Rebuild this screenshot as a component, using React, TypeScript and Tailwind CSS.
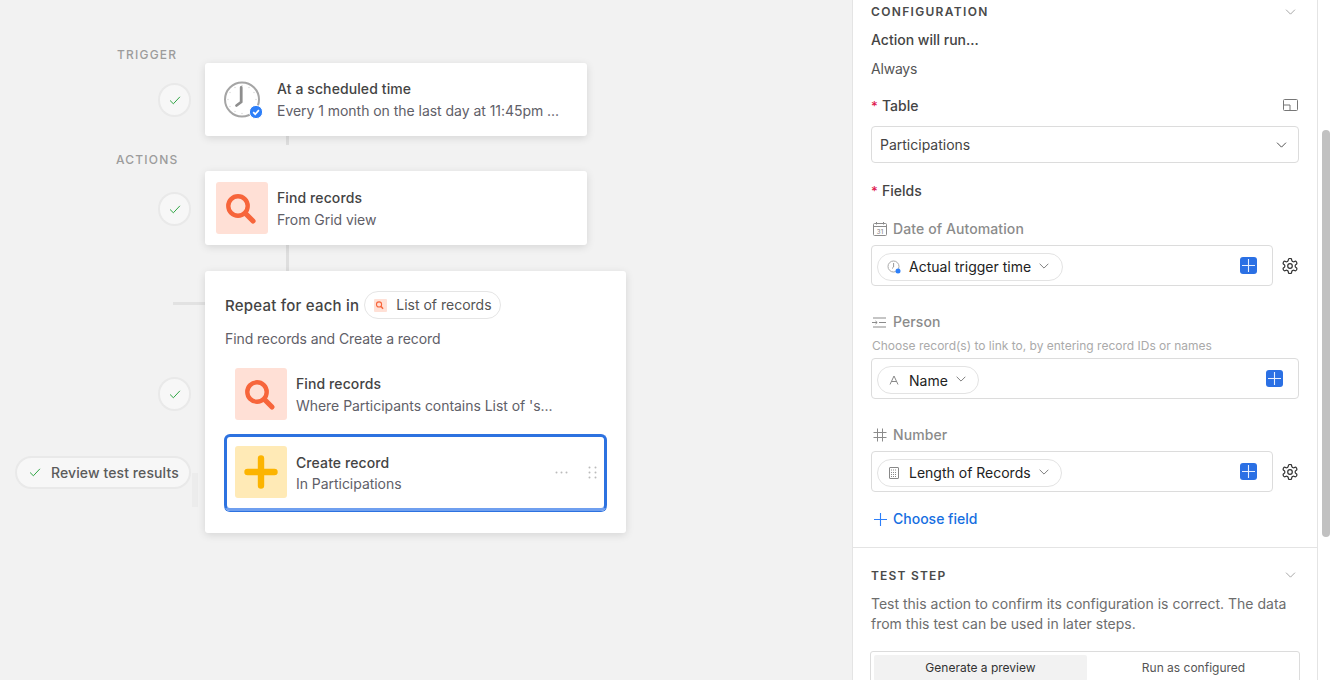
import React from "react";

const Chevron = ({ className = "" }: { className?: string }) => (
  <svg viewBox="0 0 12 7" fill="none" stroke="currentColor" strokeWidth="1" className={className}>
    <path d="M0.8 0.8 6 6 11.2 0.8" />
  </svg>
);

const Check = () => (
  <svg viewBox="0 0 14 11" width="12" height="9" fill="none" stroke="#2aa33f" strokeWidth="1.2">
    <path d="M1 5.5 5 9.5 13 1" />
  </svg>
);

const StatusDot = ({ cls }: { cls: string }) => (
  <div className={`absolute flex h-[34px] w-[33px] items-center justify-center rounded-full border-2 border-[#e9e9e9] bg-[#f7f7f7] ${cls}`}>
    <Check />
  </div>
);

const Magnifier = ({ size = 52 }: { size?: number }) => (
  <svg viewBox="0 0 52 52" width={size} height={size} fill="none" stroke="#f7653b">
    <circle cx="22" cy="24" r="9.7" strokeWidth="4.4" />
    <path d="M29.5 31.5 37 39" strokeWidth="5.2" strokeLinecap="round" />
  </svg>
);

const FindIcon = () => (
  <div className="h-[52px] w-[52px] shrink-0 rounded-[3px] bg-[#ffe0d6]">
    <Magnifier />
  </div>
);

const PlusSquare = () => (
  <div className="flex h-[17px] w-[17px] shrink-0 items-center justify-center rounded-[3px] bg-[#2b70e4]">
    <svg viewBox="0 0 13 13" width="13" height="13" stroke="#e8f0ff" strokeWidth="1.1">
      <path d="M6.5 0V13M0 6.5H13" />
    </svg>
  </div>
);

const Gear = () => (
  <svg viewBox="1.5 1.5 21 21" width="16" height="16" fill="none" stroke="#333" strokeWidth="1.6" strokeLinejoin="round">
    <path d="M12.2 2h-.4a2 2 0 0 0-2 2v.2a2 2 0 0 1-1 1.7l-.4.3a2 2 0 0 1-2 0l-.2-.1a2 2 0 0 0-2.7.7l-.2.4a2 2 0 0 0 .7 2.7l.2.1a2 2 0 0 1 1 1.7v.5a2 2 0 0 1-1 1.8l-.2.1a2 2 0 0 0-.7 2.7l.2.4a2 2 0 0 0 2.7.7l.2-.1a2 2 0 0 1 2 0l.4.3a2 2 0 0 1 1 1.7v.2a2 2 0 0 0 2 2h.4a2 2 0 0 0 2-2v-.2a2 2 0 0 1 1-1.7l.4-.3a2 2 0 0 1 2 0l.2.1a2 2 0 0 0 2.7-.7l.2-.4a2 2 0 0 0-.7-2.7l-.2-.1a2 2 0 0 1-1-1.8v-.5a2 2 0 0 1 1-1.7l.2-.1a2 2 0 0 0 .7-2.7l-.2-.4a2 2 0 0 0-2.7-.7l-.2.1a2 2 0 0 1-2 0l-.4-.3a2 2 0 0 1-1-1.7V4a2 2 0 0 0-2-2z" />
    <circle cx="12" cy="12" r="3" />
  </svg>
);

const Required = ({ label }: { label: string }) => (
  <div className="flex h-5 items-center text-sm font-medium text-[#444]">
    <span className="w-[11px] text-[13px] leading-none text-[#e0194f]">*</span>
    {label}
  </div>
);

const FieldLabel = ({ icon, label }: { icon: React.ReactNode; label: string }) => (
  <div className="flex h-5 items-center text-sm font-medium tracking-[0.1px] text-[#8b8b8b]">
    <span className="mr-[6px] flex w-[16px] justify-end">{icon}</span>
    {label}
  </div>
);

const TokenBox = ({
  icon,
  label,
  pillWidth,
  gear,
  textClass = "",
}: {
  icon: React.ReactNode;
  label: string;
  pillWidth: string;
  gear?: boolean;
  textClass?: string;
}) => (
  <div className="flex items-center">
    <div className={`flex h-[41px] items-center rounded-[4px] border border-[#dcdcdc] pr-[15px] pl-[5px] ${gear ? "w-[402px]" : "w-[428px]"}`}>
      <div className={`mt-[2px] flex h-[28px] items-center rounded-full border border-[#e3e3e3] pl-[6px] ${pillWidth}`}>
        <span className="flex w-[20px] justify-center">{icon}</span>
        <span className={`ml-[5px] text-sm text-[#222] ${textClass}`}>{label}</span>
        <Chevron className="mt-[-2px] ml-[8px] h-[6px] w-[10px] text-[#666]" />
      </div>
      <div className="ml-auto">
        <PlusSquare />
      </div>
    </div>
    {gear && (
      <div className="ml-[9px]">
        <Gear />
      </div>
    )}
  </div>
);

const Node = ({ title, sub, nudge }: { title: string; sub: string; nudge?: boolean }) => (
  <div className={`min-w-0 ${nudge ? "mt-[2px]" : ""}`}>
    <div className="text-sm leading-5 font-medium tracking-[0.1px] text-[#444]">{title}</div>
    <div className="mt-[2px] text-sm leading-5 tracking-[-0.04px] whitespace-nowrap text-[#5f6068]">{sub}</div>
  </div>
);

export default function App() {
  return (
    <div className="flex h-[680px] w-[1330px] overflow-hidden bg-white font-['Inter',sans-serif]">
      {/* canvas */}
      <div className="relative h-full w-[852px] shrink-0 bg-[#f2f2f2]">
        <div className="absolute top-[47px] left-[117px] text-xs leading-4 font-medium tracking-[0.1em] text-[#9c9c9c]">TRIGGER</div>
        <div className="absolute top-[152px] left-[116px] text-xs leading-4 font-medium tracking-[0.1em] text-[#9c9c9c]">ACTIONS</div>

        <div className="absolute top-[136px] left-[286px] h-[9px] w-[3px] bg-[#dedede]" />
        <div className="absolute top-[245px] left-[286px] h-[26px] w-[3px] bg-[#dedede]" />
        <div className="absolute top-[302px] left-[173px] h-[3px] w-[32px] bg-[#e2e2e2]" />
        <div className="absolute top-[473px] left-[192px] h-[34px] w-[6px] bg-[#ececec]" />

        <StatusDot cls="top-[83px] left-[158px]" />
        <StatusDot cls="top-[192px] left-[158px]" />
        <StatusDot cls="top-[377px] left-[158px]" />

        <div className="absolute top-[456px] left-[15px] flex h-[33px] w-[176px] items-center rounded-full border-2 border-[#e9e9e9] bg-[#f7f7f7] pl-[12px]">
          <Check />
          <span className="ml-[10px] text-sm font-medium tracking-[0.1px] text-[#5b5b5b]">Review test results</span>
        </div>

        {/* trigger card */}
        <div className="absolute top-[63px] left-[205px] flex h-[73px] w-[382px] items-center rounded-[3px] bg-white pl-[11px] shadow-[0_2px_8px_rgba(0,0,0,0.12)]">
          <div className="relative h-[52px] w-[52px] shrink-0">
            <svg viewBox="0 0 52 52" width="52" height="52" fill="none">
              <circle cx="26" cy="25.5" r="17" stroke="#a5a5a5" strokeWidth="2" />
              <path d="M25.2 13.5V28L20.5 31.5" stroke="#8e8e8e" strokeWidth="2.8" strokeLinecap="round" strokeLinejoin="round" />
              <g fill="#d5d5d5">
                <circle cx="26" cy="11.5" r="0.7" /><circle cx="33" cy="13.5" r="0.7" /><circle cx="38" cy="18.5" r="0.7" />
                <circle cx="40" cy="25.5" r="0.7" /><circle cx="38" cy="32.5" r="0.7" /><circle cx="26" cy="39.5" r="0.7" />
                <circle cx="19" cy="37.5" r="0.7" /><circle cx="14" cy="32.5" r="0.7" /><circle cx="12" cy="25.5" r="0.7" />
                <circle cx="14" cy="18.5" r="0.7" /><circle cx="19" cy="13.5" r="0.7" />
              </g>
              <circle cx="40" cy="38" r="6.6" fill="#2d7ff9" stroke="#fff" strokeWidth="1" />
              <path d="M37.2 38.2 39.2 40.2 42.9 36.1" stroke="#fff" strokeWidth="1.7" />
            </svg>
          </div>
          <div className="ml-[9px]">
            <Node title="At a scheduled time" sub="Every 1 month on the last day at 11:45pm ..." />
          </div>
        </div>

        {/* find card */}
        <div className="absolute top-[171px] left-[205px] flex h-[74px] w-[382px] items-center rounded-[3px] bg-white pl-[11px] shadow-[0_2px_8px_rgba(0,0,0,0.12)]">
          <FindIcon />
          <div className="ml-[9px]">
            <Node nudge title="Find records" sub="From Grid view" />
          </div>
        </div>

        {/* repeat card */}
        <div className="absolute top-[271px] left-[205px] h-[262px] w-[421px] rounded-[3px] bg-white px-[20px] pt-[20px] shadow-[0_2px_8px_rgba(0,0,0,0.12)]">
          <div className="flex h-[28px] items-center">
            <span className="mt-[2px] text-[15px] font-medium tracking-[0.22px] text-[#444]">Repeat for each in</span>
            <div className="ml-[5px] flex h-[28px] w-[137px] items-center rounded-full border border-[#e5e5e5] pl-[9px]">
              <span className="flex h-[13px] w-[13px] items-center justify-center rounded-[1px] bg-[#ffe0d6]">
                <svg viewBox="16 14 28 30" width="11" height="11" fill="none" stroke="#f7653b">
                  <circle cx="26" cy="26" r="7" strokeWidth="3" />
                  <path d="M31 31 37 38" strokeWidth="4" />
                </svg>
              </span>
              <span className="ml-[9px] text-sm text-[#555]">List of records</span>
            </div>
          </div>
          <div className="mt-[10px] h-5 text-sm leading-5 tracking-[-0.1px] text-[#5f6068]">Find records and Create a record</div>
          <div className="mt-[19px] ml-[10px] flex items-center">
            <FindIcon />
            <div className="ml-[9px]">
              <Node nudge title="Find records" sub="Where Participants contains List of 's..." />
            </div>
          </div>
          <div className="mt-[14px] -ml-[1px] flex h-[77px] w-[383px] items-center rounded-[6px] border-[3px] border-[#2d72e0] border-b-[#6f9fef] pl-[8px] shadow-[0_1px_0_#2d72e0]">
            <div className="-mt-[2px] flex h-[52px] w-[52px] shrink-0 items-center justify-center rounded-[3px] bg-[#ffeab6]">
              <svg viewBox="0 0 34 34" width="34" height="34" stroke="#fcb400" strokeWidth="6.4" strokeLinecap="round">
                <path d="M17 3.5V30.5M3.5 17H30.5" />
              </svg>
            </div>
            <div className="mt-[2px] ml-[9px]">
              <div className="text-sm leading-5 font-medium tracking-[0.1px] text-[#444]">Create record</div>
              <div className="mt-px text-sm leading-5 tracking-[-0.04px] text-[#5f6068]">In Participations</div>
            </div>
            <svg viewBox="0 0 13 3" width="13" height="3" fill="#bbb" className="ml-auto">
              <circle cx="1.5" cy="1.5" r="1" /><circle cx="6.5" cy="1.5" r="1" /><circle cx="11.5" cy="1.5" r="1" />
            </svg>
            <svg viewBox="0 0 9 13" width="9" height="13" fill="#bbb" className="mr-[7px] ml-[20px]">
              <circle cx="1.5" cy="1.5" r="1" /><circle cx="7.5" cy="1.5" r="1" />
              <circle cx="1.5" cy="6.5" r="1" /><circle cx="7.5" cy="6.5" r="1" />
              <circle cx="1.5" cy="11.5" r="1" /><circle cx="7.5" cy="11.5" r="1" />
            </svg>
          </div>
        </div>
      </div>

      {/* panel */}
      <div className="h-full w-[466px] shrink-0 overflow-hidden border-r border-l border-[#e4e4e4]">
        <div className="flex h-[22px] items-center justify-between pt-px pr-[21px] pl-[18px]">
          <span className="text-xs font-semibold tracking-[0.11em] text-[#4a4a4a]">CONFIGURATION</span>
          <Chevron className="h-[6px] w-[11px] text-[#999]" />
        </div>
        <div className="pr-[18px] pl-[18px]">
          <div className="mt-2 h-5 text-sm leading-5 font-medium text-[#444]">Action will run…</div>
          <div className="mt-[9px] h-5 text-sm leading-5 tracking-[-0.2px] text-[#555]">Always</div>
          <div className="mt-[17px] flex items-center justify-between">
            <Required label="Table" />
            <svg viewBox="0 0 15 12" width="15" height="12" fill="none" stroke="#777" strokeWidth="1" className="-mt-[3px] mr-[1px]">
              <rect x="0.5" y="0.5" width="14" height="11" rx="1" />
              <path d="M0.5 6H7V11.5" />
            </svg>
          </div>
          <div className="mt-[10px] flex h-[37px] items-center justify-between rounded-[4px] border border-[#dcdcdc] pr-[11px] pl-[8px]">
            <span className="text-sm text-[#444]">Participations</span>
            <Chevron className="h-[6px] w-[11px] text-[#333]" />
          </div>
          <div className="mt-[18px]">
            <Required label="Fields" />
          </div>

          <div className="mt-[18px]">
            <FieldLabel
              label="Date of Automation"
              icon={
                <svg viewBox="0 0 14 14" width="14" height="14" fill="none" stroke="#8b8b8b" strokeWidth="1">
                  <rect x="0.5" y="1.5" width="13" height="12" rx="1" />
                  <path d="M0.5 4.5H13.5M3.5 0V2.5M10.5 0V2.5" />
                  <text x="7" y="11.5" fontSize="6" textAnchor="middle" fill="#8b8b8b" stroke="none">31</text>
                </svg>
              }
            />
          </div>
          <div className="mt-[6px]">
            <TokenBox
              gear
              label="Actual trigger time"
              pillWidth="w-[186px]"
              icon={
                <svg viewBox="0 0 14 14" width="14" height="14" fill="none">
                  <circle cx="6.5" cy="6.5" r="5.5" stroke="#aaa" strokeWidth="1" />
                  <path d="M6.6 3V7L5 8.5" stroke="#999" strokeWidth="1" />
                  <circle cx="11" cy="11" r="2.5" fill="#2d7ff9" />
                </svg>
              }
            />
          </div>

          <div className="mt-[26px]">
            <FieldLabel
              label="Person"
              icon={
                <svg viewBox="0 0 15 11" width="15" height="11" fill="none" stroke="#8b8b8b" strokeWidth="1">
                  <path d="M1 1H14M7 5.5H14M1 10H14M0 5.5H5M3.5 4 5.2 5.5 3.5 7" />
                </svg>
              }
            />
          </div>
          <div className="mt-[6px] h-4 pl-px text-xs leading-4 text-[#aaa]">Choose record(s) to link to, by entering record IDs or names</div>
          <div className="mt-[4px]">
            <TokenBox
              label="Name"
              pillWidth="w-[102px]"
              textClass="mt-[2px]"
              icon={
                <svg viewBox="0 0 10 10" width="10" height="10" fill="none" stroke="#888" strokeWidth="1">
                  <path d="M1 9.5 5 1 9 9.5M2.5 6.5H7.5" />
                </svg>
              }
            />
          </div>

          <div className="mt-[26px]">
            <FieldLabel
              label="Number"
              icon={
                <svg viewBox="0 0 14 14" width="14" height="14" fill="none" stroke="#8b8b8b" strokeWidth="1">
                  <path d="M4.5 0.5V13.5M9.5 0.5V13.5M0.5 4.5H13.5M0.5 9.5H13.5" />
                </svg>
              }
            />
          </div>
          <div className="mt-[6px]">
            <TokenBox
              gear
              label="Length of Records"
              pillWidth="w-[185px]"
              icon={
                <svg viewBox="0 0 10 12" width="10" height="12" fill="none" stroke="#888" strokeWidth="1">
                  <rect x="0.5" y="0.5" width="9" height="11" rx="0.5" />
                  <path d="M2 3H8M2 5.5H8M2 7.5H8M2 9.5H8" strokeDasharray="1 1" />
                </svg>
              }
            />
          </div>

          <div className="mt-[17px] flex h-5 items-center text-sm font-medium text-[#166ee1]">
            <svg viewBox="0 0 13 13" width="13" height="13" stroke="#2d7ff9" strokeWidth="1.1" className="mr-[6px] ml-[3px]">
              <path d="M6.5 0V13M0 6.5H13" />
            </svg>
            Choose field
          </div>
        </div>

        <div className="mt-[18px] border-t border-[#e4e4e4] pr-[18px] pl-[18px]">
          <div className="mt-[18px] flex h-5 items-center justify-between pr-[3px]">
            <span className="text-xs font-semibold tracking-[0.1em] text-[#4a4a4a]">TEST STEP</span>
            <Chevron className="-mt-[2px] h-[6px] w-[11px] text-[#999]" />
          </div>
          <p className="mt-[8px] text-sm leading-5 text-[#6d6d6d]">Test this action to confirm its configuration is correct. The data from this test can be used in later steps.</p>
          <div className="mt-[17px] -ml-px flex h-[40px] w-[430px] rounded-[3px] border border-[#dcdcdc] p-[3px] text-xs">
            <div className="flex h-[26px] w-[213px] items-center justify-center rounded-[2px] bg-[#f2f2f2] text-[#333]">Generate a preview</div>
            <div className="flex h-[26px] flex-1 items-center justify-center pl-[4px] text-[#555]">Run as configured</div>
          </div>
        </div>
      </div>

      {/* scrollbar */}
      <div className="relative flex-1 bg-white">
        <div className="absolute top-[130px] left-[4px] h-[407px] w-[8px] rounded-full bg-[#c1c1c1]" />
      </div>
    </div>
  );
}
